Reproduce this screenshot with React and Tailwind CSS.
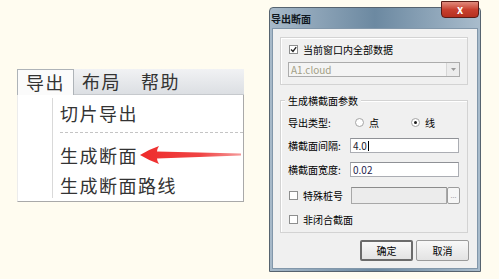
import React from 'react';

const FONT = { fontFamily: '"Noto Sans CJK SC", "Noto Sans", sans-serif' };

function Check({ checked }) {
  return (
    <span className="flex h-[9px] w-[9px] shrink-0 items-center justify-center border border-[#8e8f8f] bg-white">
      {checked && (
        <svg viewBox="0 0 7 7" className="h-[7px] w-[7px]">
          <path d="M1 3.5 L3 5.5 L6.2 1.2" fill="none" stroke="#222" strokeWidth="1.4" />
        </svg>
      )}
    </span>
  );
}

function Radio({ on, label }) {
  return (
    <div className="flex w-[57px] items-center gap-[5px]">
      <span className="flex h-[9px] w-[9px] items-center justify-center rounded-full border border-[#a4a4a4] bg-white">
        {on && <span className="h-[3px] w-[3px] rounded-full bg-[#1b1b1b]" />}
      </span>
      <span>{label}</span>
    </div>
  );
}

function MenuPanel() {
  return (
    <div className="relative ml-[17px] mt-[69px] w-[227px] text-[18px] tracking-[1.5px] text-[#333]">
      <div className="flex h-[26px] items-stretch border-b border-[#c6c9cd] bg-linear-to-b from-[#f1f2f4] to-[#dcdfe3]">
        <div className="-mb-px flex w-[57px] items-center justify-center border-x border-t border-[#aeb3b8] bg-[#fbfbfb]">
          导出
        </div>
        <div className="ml-[8px] flex items-center">布局</div>
        <div className="ml-[20px] flex items-center">帮助</div>
      </div>
      <div className="flex h-[107px] border-b border-r border-l border-[#a9a9a9] border-l-[#ececec] bg-white">
        <div className="my-[3px] w-[35px] border-r border-[#d9d9d9]" />
        <div className="flex flex-1 flex-col pt-[3px]">
          <div className="flex h-[30px] items-center pl-[7px]">切片导出</div>
          <div className="h-[12px] pl-[7px] pt-[4px]">
            <div className="border-t border-dashed border-[#c4c4c4]" />
          </div>
          <div className="flex h-[30px] items-center pl-[7px]">生成断面</div>
          <div className="flex h-[30px] items-center pl-[7px]">生成断面路线</div>
        </div>
      </div>
      <svg viewBox="0 0 105 22" className="absolute left-[121px] top-[75px] h-[22px] w-[105px]">
        <defs>
          <linearGradient id="arr" x1="0" x2="1" y1="0" y2="0">
            <stop offset="0" stopColor="#ee2b2b" />
            <stop offset="0.6" stopColor="#f04444" />
            <stop offset="1" stopColor="#f59a9a" />
          </linearGradient>
        </defs>
        <path
          d="M2 11 Q12 5 21 2 Q19 5 19 7.5 L103 9.5 L103 11.5 L19 14.5 Q19 17 21 20 Q12 17 2 11 Z"
          fill="url(#arr)"
        />
      </svg>
    </div>
  );
}

function Dialog() {
  return (
    <div className="relative ml-[25px] mt-[7px] flex h-[265px] w-[212px] flex-col rounded-t-[4px] border border-[#56636f] bg-linear-to-r from-[#a7b9c9] via-[#6c89a1] to-[#a9bccc] text-[10px] text-black">
      <div className="flex h-[20px] items-center pl-[1px] font-bold text-[#101820]">导出断面</div>
      <div className="absolute -top-[7px] right-[1px] flex h-[17px] w-[38px] items-center justify-center rounded-b-[4px] border border-[#5a1b15] bg-linear-to-b from-[#e08a7c] via-[#c8402f] to-[#b5301f] text-[11px] font-bold leading-none text-white">
        x
      </div>
      <div className="mx-[2px] mb-[2px] flex flex-1 flex-col border border-[#8297aa] bg-[#f0f0f0] pl-[7px] pt-[8px]">
        <div className="flex h-[48px] w-[188px] flex-col border border-[#d3d3d3] pl-[7px] pt-[5px] shadow-[inset_1px_1px_0_#fff]">
          <div className="flex h-[12px] items-center gap-[5px] pl-[1px]">
            <Check checked />
            <span>当前窗口内全部数据</span>
          </div>
          <div className="mt-[7px] flex h-[15px] w-[172px] items-center border border-[#acacac] bg-[#f4f4f4] pl-[2px]">
            <span className="flex-1 text-[#a39f86]">A1.cloud</span>
            <span className="flex h-[13px] w-[13px] items-center justify-center border-l border-[#d6d6d6] bg-[#ececec]">
              <svg viewBox="0 0 5 3" className="h-[3px] w-[5px]">
                <path d="M0 0 L5 0 L2.5 3 Z" fill="#9a9a9a" />
              </svg>
            </span>
          </div>
        </div>

        <div className="relative mt-[15px] flex h-[133px] w-[188px] flex-col border border-[#d3d3d3] pl-[7px] pt-[14px] shadow-[inset_1px_1px_0_#fff]">
          <span className="absolute -top-[8px] left-[4px] bg-[#f0f0f0] px-[3px]">生成横截面参数</span>
          <div className="flex h-[14px] items-center">
            <span className="w-[68px]">导出类型:</span>
            <Radio label="点" />
            <Radio on label="线" />
          </div>
          <div className="mt-[9px] flex h-[15px] items-center">
            <span className="w-[62px]">横截面间隔:</span>
            <span className="flex h-[15px] w-[109px] items-center border border-[#abadb3] border-t-[#8f9196] bg-white pl-[2px] text-[#1c1c2e]">
              4.0<span className="ml-px h-[10px] w-px bg-black" />
            </span>
          </div>
          <div className="mt-[9px] flex h-[15px] items-center">
            <span className="w-[62px]">横截面宽度:</span>
            <span className="flex h-[15px] w-[109px] items-center border border-[#abadb3] border-t-[#8f9196] bg-white pl-[2px] text-[#2a1f50]">
              0.02
            </span>
          </div>
          <div className="mt-[10px] flex h-[17px] items-center">
            <div className="flex w-[63px] items-center gap-[5px] pl-[1px]">
              <Check />
              <span>特殊桩号</span>
            </div>
            <span className="h-[17px] w-[96px] border border-[#a8a8a8] border-t-[#8c8c8c] bg-[#ececec]" />
            <span className="flex h-[17px] w-[13px] items-center justify-center rounded-[2px] border border-[#9c9c9c] bg-[#f6f6f6] text-[7px] leading-none text-[#9a9a9a]">
              ...
            </span>
          </div>
          <div className="mt-[8px] flex h-[14px] items-center gap-[5px] pl-[1px]">
            <Check />
            <span>非闭合截面</span>
          </div>
        </div>

        <div className="mt-[7px] flex w-[189px] justify-end gap-[3px]">
          <div className="flex h-[21px] w-[53px] items-center justify-center rounded-[2px] border-2 border-[#6b6b6b] bg-linear-to-b from-[#f8f8f8] to-[#e3e3e3]">
            确定
          </div>
          <div className="flex h-[21px] w-[53px] items-center justify-center rounded-[2px] border border-[#9a9a9a] bg-linear-to-b from-[#f8f8f8] to-[#e3e3e3]">
            取消
          </div>
        </div>
      </div>
    </div>
  );
}

export default function App() {
  return (
    <div className="flex h-[279px] w-[499px] items-start overflow-hidden bg-[#fffcf0]" style={FONT}>
      <MenuPanel />
      <Dialog />
    </div>
  );
}
